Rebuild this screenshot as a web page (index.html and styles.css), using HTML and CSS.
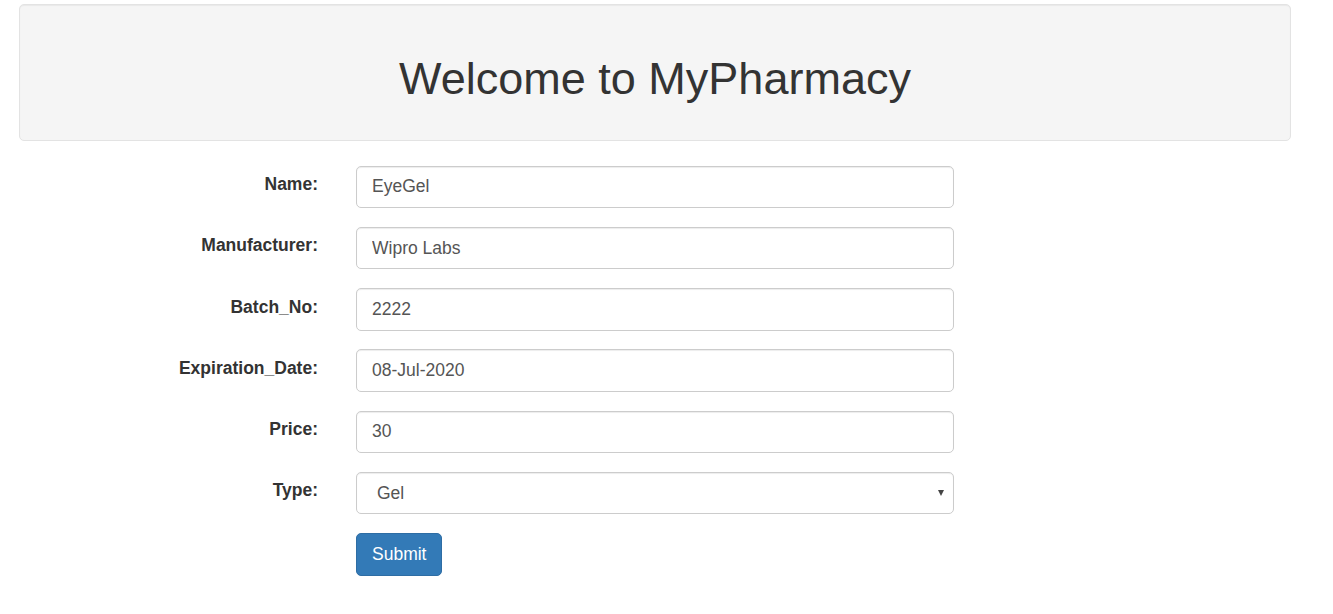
FILE: index.html
```html
<!DOCTYPE html>
<html>
<head>
<meta charset="utf-8">
<title>MyPharmacy</title>
<link rel="stylesheet" href="styles.css">
</head>
<body>
<div class="page">
  <div class="well">
    <h1 class="title">Welcome to MyPharmacy</h1>
  </div>
  <form class="form">
    <div class="form-group">
      <label class="form-label">Name:</label>
      <div class="field"><input class="form-control" type="text" value="EyeGel"></div>
    </div>
    <div class="form-group">
      <label class="form-label">Manufacturer:</label>
      <div class="field"><input class="form-control" type="text" value="Wipro Labs"></div>
    </div>
    <div class="form-group">
      <label class="form-label">Batch_No:</label>
      <div class="field"><input class="form-control" type="text" value="2222"></div>
    </div>
    <div class="form-group">
      <label class="form-label">Expiration_Date:</label>
      <div class="field"><input class="form-control" type="text" value="08-Jul-2020"></div>
    </div>
    <div class="form-group">
      <label class="form-label">Price:</label>
      <div class="field"><input class="form-control" type="text" value="30"></div>
    </div>
    <div class="form-group">
      <label class="form-label">Type:</label>
      <div class="field select-wrap">
        <select class="form-control select">
          <option>Gel</option>
          <option>Tablet</option>
          <option>Syrup</option>
        </select>
        <span class="caret"></span>
      </div>
    </div>
    <div class="form-group">
      <span class="form-label"></span>
      <div class="field"><button type="button" class="btn">Submit</button></div>
    </div>
  </form>
</div>
</body>
</html>
```

FILE: styles.css
```css
* { box-sizing: border-box; }
html, body { margin: 0; padding: 0; }
body {
  font-family: "Liberation Sans", Arial, Helvetica, sans-serif;
  font-size: 17.5px;
  line-height: 1.428571;
  color: #333;
  background: #fff;
}
.page {
  padding: 4px 42px 0 19px;
}
.well {
  background: #f5f5f5;
  border: 1px solid #e3e3e3;
  border-radius: 5px;
  box-shadow: inset 0 1px 1px rgba(0,0,0,0.05);
  padding: 23.75px;
  margin-bottom: 25px;
  text-align: center;
}
.title {
  font-size: 45px;
  font-weight: 500;
  line-height: 1.1;
  margin: 25px 0 12.5px;
  color: #333;
}
.form-group {
  display: flex;
  align-items: flex-start;
  margin-bottom: 18.75px;
}
.form-label {
  flex: 0 0 299px;
  text-align: right;
  font-weight: bold;
  padding-top: 6.5px;
  margin-right: 38px;
}
.field {
  flex: 0 0 598px;
  position: relative;
}
.form-control {
  display: block;
  width: 100%;
  height: 42.5px;
  padding: 7.5px 15px;
  font-family: inherit;
  font-size: 17.5px;
  line-height: 1.428571;
  color: #555;
  background: #fff;
  border: 1px solid #ccc;
  border-radius: 5px;
  box-shadow: inset 0 1px 1px rgba(0,0,0,0.075);
  outline: none;
}
.select {
  -webkit-appearance: none;
  appearance: none;
  padding-left: 20px;
}
.caret {
  position: absolute;
  right: 10px;
  top: 18px;
  width: 0;
  height: 0;
  border-left: 3.5px solid transparent;
  border-right: 3.5px solid transparent;
  border-top: 6px solid #444;
  pointer-events: none;
}
.btn {
  display: inline-block;
  height: 42.5px;
  padding: 7.5px 15px;
  font-family: inherit;
  font-size: 17.5px;
  line-height: 1.428571;
  color: #fff;
  background: #337ab7;
  border: 1px solid #2e6da4;
  border-radius: 5px;
  cursor: pointer;
}
```
